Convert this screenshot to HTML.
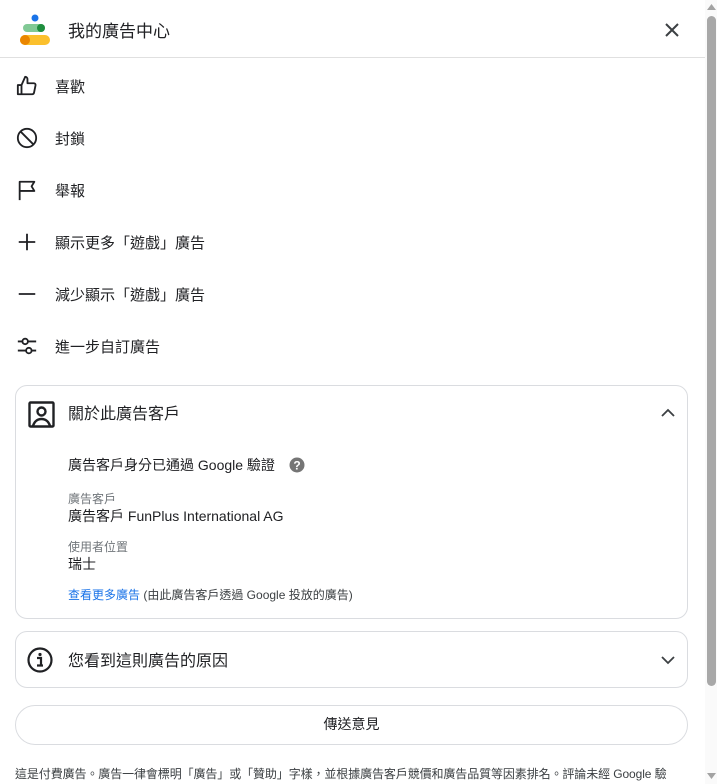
<!DOCTYPE html>
<html><head><meta charset="utf-8"><style>
*{margin:0;padding:0;box-sizing:border-box}
body{width:717px;height:784px;overflow:hidden;background:#fff;font-family:"Liberation Sans","Noto Sans CJK TC",sans-serif;color:#202124;position:relative}
.abs{position:absolute}
.item{position:absolute;left:0;height:52px;width:700px;display:flex;align-items:center}
.item svg{position:absolute;left:16px}
.item span{position:absolute;left:55px;top:19px;font-size:15px;color:#202124;line-height:18px}
.card{position:absolute;left:15px;width:673px;border:1px solid #dadce0;border-radius:12px}
.t{position:absolute;white-space:nowrap}
</style></head><body>
<svg class="abs" style="left:19px;top:14px" width="32" height="32" viewBox="0 0 32 32">
<circle cx="16" cy="4" r="3.5" fill="#1a73e8"/>
<rect x="4" y="10" width="22" height="8" rx="4" fill="#81c995"/>
<circle cx="22" cy="14" r="4" fill="#1e8e3e"/>
<rect x="1" y="21" width="30" height="10" rx="5" fill="#fbc02d"/>
<circle cx="6" cy="26" r="5" fill="#ea8600"/>
</svg>
<div class="t" style="left:68px;top:22px;font-size:17px;line-height:20px">我的廣告中心</div>
<svg class="abs" style="left:664px;top:22px" width="16" height="16" viewBox="0 0 16 16"><path d="M2 2L14 14M14 2L2 14" stroke="#3c4043" stroke-width="2"/></svg>
<div class="abs" style="left:0;top:57px;width:705px;height:1px;background:#e0e0e0"></div>

<div class="item" style="top:60px"><svg width="22" height="22" viewBox="0 0 24 24" fill="none" stroke="#202124" stroke-width="2" stroke-linejoin="round"><path d="M2 11h4v10H2z M6 11l4-9c1.5 0 2.5 1 2.5 2.5V9h7c1.2 0 2 1 1.8 2.2l-1.6 8c-.2 1-1 1.8-2 1.8H6"/></svg><span>喜歡</span></div>
<div class="item" style="top:112px"><svg width="22" height="22" viewBox="0 0 24 24" fill="none" stroke="#202124" stroke-width="2"><circle cx="12" cy="12" r="10"/><path d="M5 5l14 14"/></svg><span>封鎖</span></div>
<div class="item" style="top:164px"><svg width="22" height="22" viewBox="0 0 24 24" fill="none" stroke="#202124" stroke-width="2" stroke-linejoin="round"><path d="M4 23V3h16l-3 5 3 5H4"/></svg><span>舉報</span></div>
<div class="item" style="top:216px"><svg width="22" height="22" viewBox="0 0 24 24" fill="none" stroke="#202124" stroke-width="2"><path d="M12 3v18M3 12h18"/></svg><span>顯示更多「遊戲」廣告</span></div>
<div class="item" style="top:268px"><svg width="22" height="22" viewBox="0 0 24 24" fill="none" stroke="#202124" stroke-width="2"><path d="M3 12h18"/></svg><span>減少顯示「遊戲」廣告</span></div>
<div class="item" style="top:320px"><svg width="22" height="22" viewBox="0 0 24 24" fill="none" stroke="#202124" stroke-width="2"><path d="M2 7h5M13 7h9M2 17h9M17 17h5"/><circle cx="10" cy="7" r="3"/><circle cx="14" cy="17" r="3"/></svg><span>進一步自訂廣告</span></div>

<div class="card" style="top:385px;height:234px">
<svg class="abs" style="left:12px;top:15px" width="27" height="27" viewBox="0 0 27 27" fill="none" stroke="#202124" stroke-width="2.4"><rect x="1.5" y="1.5" width="24" height="24" rx="1"/><circle cx="13.5" cy="10.5" r="4"/><path d="M5 25c1.5-5 5-7 8.5-7s7 2 8.5 7"/></svg>
<div class="t" style="left:52px;top:19px;font-size:16px;line-height:20px">關於此廣告客戶</div>
<svg class="abs" style="left:645px;top:22px" width="14" height="10" viewBox="0 0 14 10"><path d="M1 8l6-6 6 6" fill="none" stroke="#3c4043" stroke-width="1.8"/></svg>
<div class="t" style="left:52px;top:71px;font-size:14px;line-height:17px">廣告客戶身分已通過 Google 驗證</div>
<svg class="abs" style="left:273px;top:71px" width="16" height="16" viewBox="0 0 16 16"><circle cx="8" cy="8" r="7.5" fill="#757575"/><text x="8" y="12.5" font-size="12" font-weight="bold" fill="#fff" text-anchor="middle" font-family="Liberation Sans">?</text></svg>
<div class="t" style="left:52px;top:106px;font-size:12px;line-height:14px;color:#70757a">廣告客戶</div>
<div class="t" style="left:52px;top:122px;font-size:14px;line-height:17px">廣告客戶 FunPlus International AG</div>
<div class="t" style="left:52px;top:154px;font-size:12px;line-height:14px;color:#70757a">使用者位置</div>
<div class="t" style="left:52px;top:170px;font-size:14px;line-height:17px">瑞士</div>
<div class="t" style="left:52px;top:202px;font-size:12px;line-height:14px;color:#3c4043"><span style="color:#1a73e8">查看更多廣告</span> (由此廣告客戶透過 Google 投放的廣告)</div>
</div>

<div class="card" style="top:631px;height:57px">
<svg class="abs" style="left:11px;top:15px" width="26" height="26" viewBox="0 0 26 26"><circle cx="13" cy="13" r="11.5" fill="none" stroke="#202124" stroke-width="2.2"/><circle cx="13" cy="7.5" r="1.6" fill="#202124"/><path d="M10 11h4v7M10 18.5h6" stroke="#202124" stroke-width="2.2" fill="none"/></svg>
<div class="t" style="left:52px;top:20px;font-size:16px;line-height:20px">您看到這則廣告的原因</div>
<svg class="abs" style="left:645px;top:23px" width="14" height="10" viewBox="0 0 14 10"><path d="M1 2l6 6 6-6" fill="none" stroke="#3c4043" stroke-width="1.8"/></svg>
</div>

<div class="abs" style="left:15px;top:705px;width:673px;height:40px;border:1px solid #dadce0;border-radius:20px;text-align:center;line-height:37px;font-size:14px">傳送意見</div>
<div class="t" style="left:15px;top:767px;font-size:12px;line-height:14px;color:#3c4043;letter-spacing:-0.1px">這是付費廣告。廣告一律會標明「廣告」或「贊助」字樣，並根據廣告客戶競價和廣告品質等因素排名。評論未經 Google 驗</div>

<div class="abs" style="left:705px;top:0;width:12px;height:784px;background:#fafafa"></div>
<div class="abs" style="left:707px;top:16px;width:9px;height:670px;background:#a8a8a8;border-radius:5px"></div>
<svg class="abs" style="left:707px;top:3px" width="9" height="8" viewBox="0 0 9 8"><path d="M0 7L4.5 1 9 7z" fill="#a3a3a3"/></svg>
<svg class="abs" style="left:707px;top:772px" width="9" height="8" viewBox="0 0 9 8"><path d="M0 1L4.5 7 9 1z" fill="#a3a3a3"/></svg>
</body></html>
